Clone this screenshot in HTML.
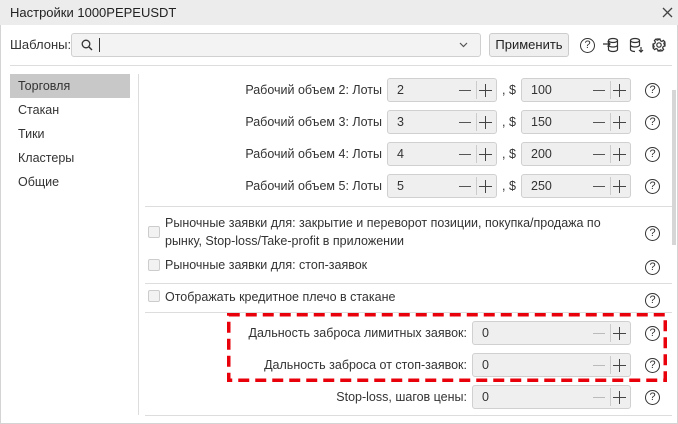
<!DOCTYPE html>
<html><head><meta charset="utf-8"><style>
*{box-sizing:border-box;margin:0;padding:0}
body{width:678px;height:424px;background:#fff;font-family:"Liberation Sans",sans-serif;font-size:12.5px;color:#333;position:relative;overflow:hidden}
.a{position:absolute}
.t{position:absolute;white-space:nowrap;line-height:16px}
.r{text-align:right}
.inp{position:absolute;height:24px;background:#efefef;border:1px solid #d0d0d0;border-radius:3px}
.inp .v{position:absolute;left:9px;top:4px;line-height:15px}
.inp .m{position:absolute;right:25px;top:11px;width:12px;height:1.2px;background:#555}
.inp .m.d{background:#bbb}
.inp .dv{position:absolute;right:19px;top:2px;width:1px;height:18px;background:#ccc}
.inp .p{position:absolute;right:4px;top:5px;width:13px;height:13px}
.inp .p:before{content:"";position:absolute;left:0;top:6px;width:13px;height:1.3px;background:#444}
.inp .p:after{content:"";position:absolute;left:6px;top:0;width:1.3px;height:13px;background:#444}
.q{position:absolute;width:15px;height:15px;border:1.2px solid #333;border-radius:50%;font-size:11px;text-align:center;line-height:13px;color:#333}
.cb{position:absolute;width:12px;height:12px;border:1px solid #ccc;border-radius:2px;background:#f2f2f2}
.ln{position:absolute;height:1px;background:#ddd}
</style></head><body>
<div class="a" style="left:0;top:0;width:678px;height:424px;border:1px solid #d4d4d4"></div>
<div class="a" style="left:0;top:0;width:678px;height:25px;background:#ececec"></div>
<div class="t" style="left:10px;top:5px;font-size:13px;color:#222">Настройки 1000PEPEUSDT</div>
<svg class="a" style="left:662px;top:7px" width="11" height="11"><path d="M1 1L10 10M10 1L1 10" stroke="#444" stroke-width="1.3"/></svg>

<div class="t" style="left:10px;top:37px;font-size:13px">Шаблоны:</div>
<div class="inp" style="left:71px;top:33px;width:410px;height:24px;background:#f3f3f3"></div>
<svg class="a" style="left:81px;top:39px" width="12" height="12"><circle cx="5" cy="5" r="3.8" fill="none" stroke="#333" stroke-width="1.3"/><path d="M8 8L11 11" stroke="#333" stroke-width="1.4"/></svg>
<div class="a" style="left:99px;top:38px;width:1px;height:14px;background:#333"></div>
<svg class="a" style="left:459px;top:42px" width="9" height="6"><path d="M1 1L4.5 4.5L8 1" fill="none" stroke="#555" stroke-width="1.2"/></svg>
<div class="a" style="left:489px;top:33px;width:80px;height:24px;background:#efefef;border:1px solid #ccc;border-radius:3px"></div>
<div class="t" style="left:489px;top:37px;width:80px;text-align:center;font-size:13px;color:#222">Применить</div>
<div class="q" style="left:580px;top:38px">?</div>
<svg class="a" style="left:602px;top:37px" width="17" height="16" fill="none" stroke="#333" stroke-width="1.2"><ellipse cx="11" cy="3.5" rx="4.5" ry="2"/><path d="M6.5 3.5V12.5c0 1.1 2 2 4.5 2s4.5-.9 4.5-2V3.5M6.5 8c0 1.1 2 2 4.5 2s4.5-.9 4.5-2M1 7h7M5.5 4.5L8 7L5.5 9.5"/></svg>
<svg class="a" style="left:629px;top:37px" width="15" height="16" fill="none" stroke="#333" stroke-width="1.2"><ellipse cx="6" cy="3.5" rx="4.5" ry="2"/><path d="M1.5 3.5V12.5c0 1.1 2 2 4.5 2M10.5 3.5V9M1.5 8c0 1.1 2 2 4.5 2s4.5-.9 4.5-2M12 10v5M10 13l2 2 2-2"/></svg>
<svg class="a" style="left:652px;top:38px" width="14" height="14" fill="none" stroke="#333" stroke-width="1.2"><circle cx="7" cy="7" r="2.2"/><path d="M6 1h2l.4 1.7 1.5.7 1.5-1 1.4 1.4-1 1.5.7 1.5L13 6v2l-1.7.4-.7 1.5 1 1.5-1.4 1.4-1.5-1-1.5.7L8 13H6l-.4-1.7-1.5-.7-1.5 1-1.4-1.4 1-1.5-.7-1.5L1 8V6l1.7-.4.7-1.5-1-1.5 1.4-1.4 1.5 1 1.5-.7z"/></svg>
<div class="ln" style="left:10px;top:65px;width:662px"></div>

<div class="a" style="left:10px;top:74px;width:120px;height:24px;background:#c8c8c8"></div>
<div class="t" style="left:18px;top:78px">Торговля</div>
<div class="t" style="left:18px;top:102px">Стакан</div>
<div class="t" style="left:18px;top:126px">Тики</div>
<div class="t" style="left:18px;top:150px">Кластеры</div>
<div class="t" style="left:18px;top:174px">Общие</div>
<div class="a" style="left:138px;top:74px;width:1px;height:341px;background:#ddd"></div>
<div class="a" style="left:672px;top:90px;width:4px;height:155px;background:#d6d6d6"></div>

<div class="t r" style="left:180px;width:202px;top:82px">Рабочий объем 2: Лоты</div>
<div class="inp" style="left:387px;top:78px;width:110px"><span class="v">2</span><i class="m"></i><i class="dv"></i><i class="p"></i></div>
<div class="t" style="left:502px;top:82px">, $</div>
<div class="inp" style="left:521px;top:78px;width:110px"><span class="v">100</span><i class="m"></i><i class="dv"></i><i class="p"></i></div>
<div class="q" style="left:645px;top:83px">?</div>

<div class="t r" style="left:180px;width:202px;top:114px">Рабочий объем 3: Лоты</div>
<div class="inp" style="left:387px;top:110px;width:110px"><span class="v">3</span><i class="m"></i><i class="dv"></i><i class="p"></i></div>
<div class="t" style="left:502px;top:114px">, $</div>
<div class="inp" style="left:521px;top:110px;width:110px"><span class="v">150</span><i class="m"></i><i class="dv"></i><i class="p"></i></div>
<div class="q" style="left:645px;top:115px">?</div>

<div class="t r" style="left:180px;width:202px;top:146px">Рабочий объем 4: Лоты</div>
<div class="inp" style="left:387px;top:142px;width:110px"><span class="v">4</span><i class="m"></i><i class="dv"></i><i class="p"></i></div>
<div class="t" style="left:502px;top:146px">, $</div>
<div class="inp" style="left:521px;top:142px;width:110px"><span class="v">200</span><i class="m"></i><i class="dv"></i><i class="p"></i></div>
<div class="q" style="left:645px;top:147px">?</div>

<div class="t r" style="left:180px;width:202px;top:178px">Рабочий объем 5: Лоты</div>
<div class="inp" style="left:387px;top:174px;width:110px"><span class="v">5</span><i class="m"></i><i class="dv"></i><i class="p"></i></div>
<div class="t" style="left:502px;top:178px">, $</div>
<div class="inp" style="left:521px;top:174px;width:110px"><span class="v">250</span><i class="m"></i><i class="dv"></i><i class="p"></i></div>
<div class="q" style="left:645px;top:179px">?</div>

<div class="ln" style="left:145px;top:206px;width:527px"></div>
<div class="cb" style="left:148px;top:226px"></div>
<div class="t" style="left:165px;top:214px;line-height:18px">Рыночные заявки для: закрытие и переворот позиции, покупка/продажа по<br>рынку, Stop-loss/Take-profit в приложении</div>
<div class="q" style="left:645px;top:226px">?</div>
<div class="cb" style="left:148px;top:259px"></div>
<div class="t" style="left:165px;top:257px">Рыночные заявки для: стоп-заявок</div>
<div class="q" style="left:645px;top:260px">?</div>
<div class="ln" style="left:145px;top:283px;width:527px"></div>
<div class="cb" style="left:148px;top:290px"></div>
<div class="t" style="left:165px;top:289px">Отображать кредитное плечо в стакане</div>
<div class="q" style="left:645px;top:293px">?</div>
<div class="ln" style="left:145px;top:312px;width:527px"></div>

<div class="t r" style="left:230px;width:237px;top:325px">Дальность заброса лимитных заявок:</div>
<div class="inp" style="left:472px;top:321px;width:159px"><span class="v">0</span><i class="m d"></i><i class="dv"></i><i class="p"></i></div>
<div class="q" style="left:645px;top:326px">?</div>
<div class="t r" style="left:230px;width:237px;top:357px">Дальность заброса от стоп-заявок:</div>
<div class="inp" style="left:472px;top:353px;width:159px"><span class="v">0</span><i class="m d"></i><i class="dv"></i><i class="p"></i></div>
<div class="q" style="left:645px;top:358px">?</div>
<div class="t r" style="left:230px;width:237px;top:389px">Stop-loss, шагов цены:</div>
<div class="inp" style="left:472px;top:385px;width:159px"><span class="v">0</span><i class="m d"></i><i class="dv"></i><i class="p"></i></div>
<div class="q" style="left:645px;top:390px">?</div>
<svg class="a" style="left:227px;top:313px" width="440" height="69"><rect x="1.75" y="1.75" width="436.5" height="65.5" fill="none" stroke="#e8000b" stroke-width="3.5" stroke-dasharray="11 6"/></svg>
<div class="ln" style="left:145px;top:415px;width:527px"></div>
</body></html>
